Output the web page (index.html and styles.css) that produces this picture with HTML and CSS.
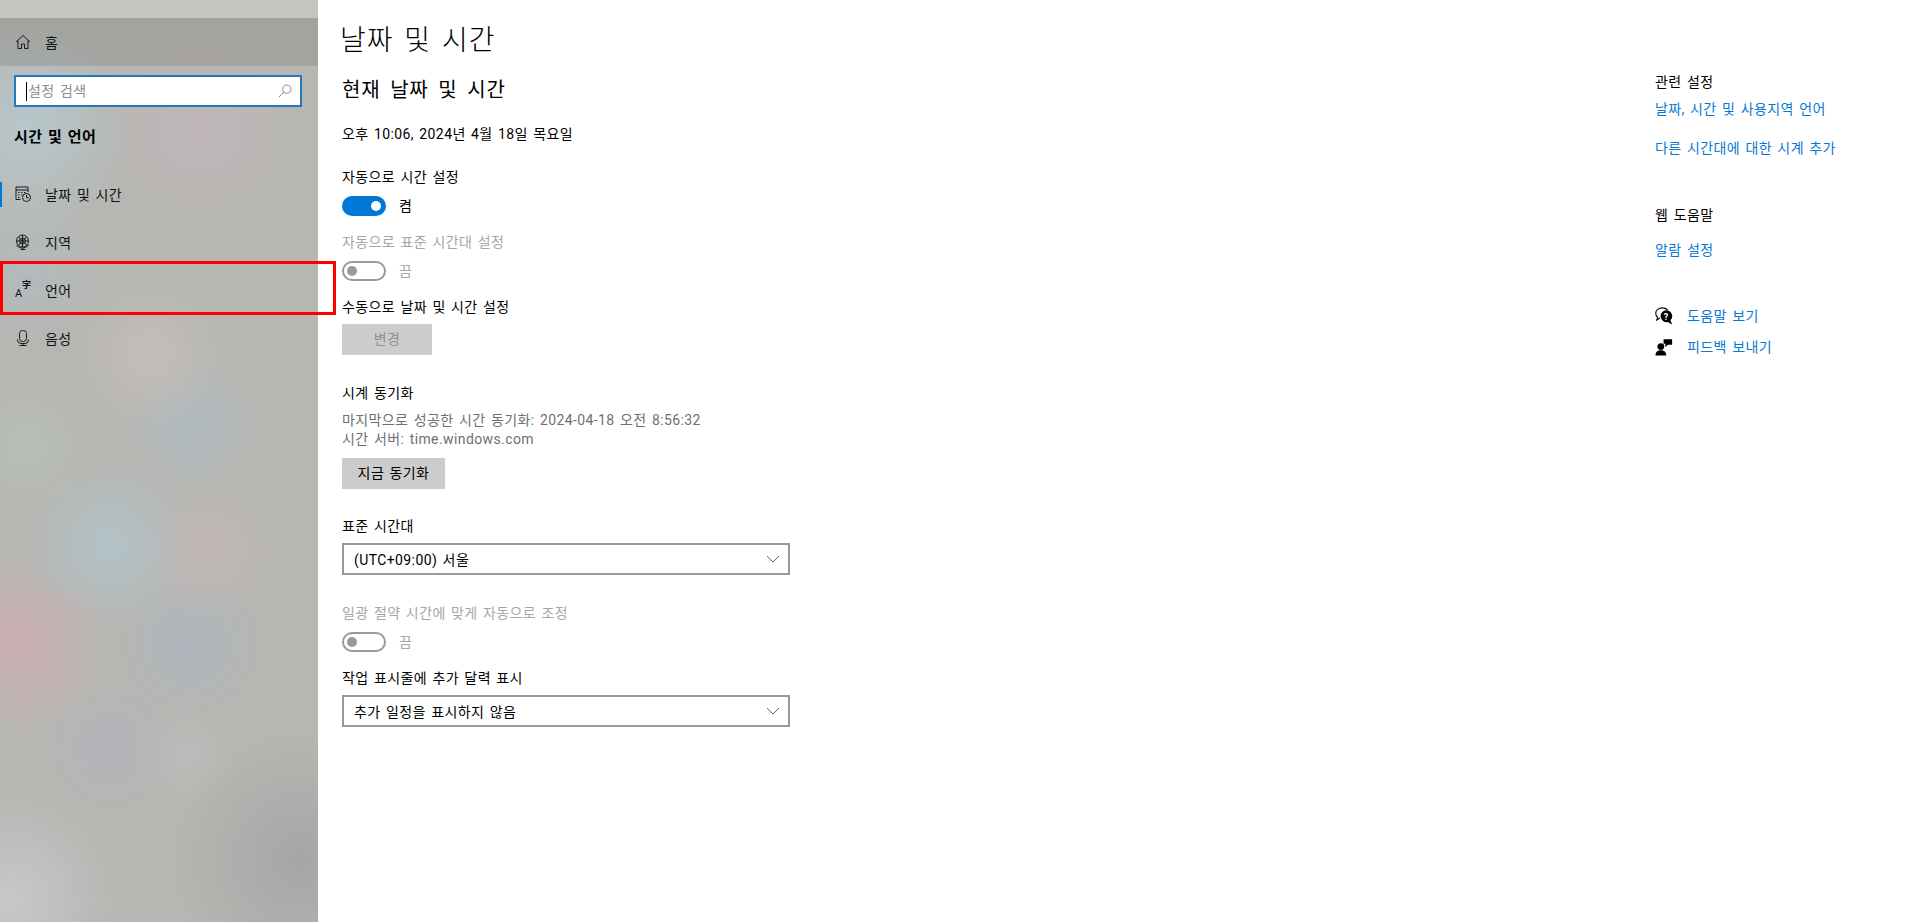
FILE: index.html
```html
<!DOCTYPE html>
<html lang="ko">
  <head>
    <meta charset="UTF-8" />
    <meta name="viewport" content="width=device-width, initial-scale=1.0" />
    <title>날짜 및 시간</title>
    <link rel="stylesheet" href="styles.css">
  </head>

  <body>
    <div class="page">
      <!-- sidebar -->
      <nav class="sidebar">
        <div class="top-strip"></div>
        <div class="nav-item nav-home">
          <svg class="nav-icon" viewBox="0 0 16 16"><path d="M1 8 8 1.500l7 6.500M3 6.500v8h3.500v-4.500h3v4.500h3.500v-8" /></svg>
          <span class="home-text">홈</span>
        </div>
        <div class="search">
          <span class="search-text">설정 검색</span>
          <svg class="search-icon" viewBox="0 0 14 14"><circle cx="8.800" cy="5.200" r="4.200" /><path d="M5.800 8.200 1 13" /></svg>
        </div>
        <div class="side-title">시간 및 언어</div>
        <div class="nav-item nav-active">
          <svg class="nav-icon" viewBox="0 0 16 16">
            <path d="M5.500 13.500h-4.500v-12.500h12v5M1 4h12" />
            <path d="M3 6.500h1.500M6 6.500h1.500M9 6.500h1.500M3 9h1.500M6 9h1.500M3 11.500h1.500" />
            <circle cx="11.500" cy="11.500" r="4" />
            <path d="M11.500 9v2.700h2.300" />
          </svg>
          <span>날짜 및 시간</span>
        </div>
        <div class="nav-item">
          <svg class="nav-icon" viewBox="0 0 16 16">
            <circle cx="7.500" cy="7" r="6" />
            <circle cx="7.500" cy="7" r="3" />
            <path d="M3.500 3l8 8M11.500 3l-8 8M7.500 1v12M1.500 7h12M1.500 11.500Q7.500 17 14 11M8 14.500v1M5.500 15.500h5" />
          </svg>
          <span>지역</span>
        </div>
        <div class="nav-item">
          <span class="lang-icon"><span class="lang-a">A</span><span class="lang-ja">字</span></span>
          <span>언어</span>
        </div>
        <div class="nav-item">
          <svg class="nav-icon" viewBox="0 0 16 16">
            <rect x="4.500" y="0.500" width="7" height="11" rx="3" />
            <path d="M2.500 9.500v.5a3.500 3.500 0 0 0 3.500 3.500h4a3.500 3.500 0 0 0 3.500-3.500v-.5M8 13.500v2M4.500 15.500h7" />
          </svg>
          <span>음성</span>
        </div>
      </nav>

      <!-- content -->
      <main class="main">
        <h1 class="title">날짜 및 시간</h1>
        <h2 class="subtitle">현재 날짜 및 시간</h2>
        <div class="line date-line">오후 10:06, 2024년 4월 18일 목요일</div>

        <div class="line auto-time">자동으로 시간 설정</div>
        <div class="toggle-row">
          <span class="toggle toggle-on"></span>
          <span class="toggle-text">켬</span>
        </div>

        <div class="line gap-s disabled">자동으로 표준 시간대 설정</div>
        <div class="toggle-row">
          <span class="toggle"></span>
          <span class="toggle-text disabled">끔</span>
        </div>

        <div class="line gap-s">수동으로 날짜 및 시간 설정</div>
        <div class="btn btn-change">변경</div>

        <div class="line gap-l">시계 동기화</div>
        <div class="desc">
          <div>마지막으로 성공한 시간 동기화: 2024-04-18 오전 8:56:32</div>
          <div>시간 서버: time.windows.com</div>
        </div>
        <div class="btn btn-sync">지금 동기화</div>

        <div class="line gap-zone">표준 시간대</div>
        <div class="select">
          <span>(UTC+09:00) 서울</span>
          <svg class="chevron" viewBox="0 0 14 8"><path d="M1 1l6 6 6-6" /></svg>
        </div>

        <div class="line gap-l disabled">일광 절약 시간에 맞게 자동으로 조정</div>
        <div class="toggle-row">
          <span class="toggle"></span>
          <span class="toggle-text disabled">끔</span>
        </div>

        <div class="line gap-s">작업 표시줄에 추가 달력 표시</div>
        <div class="select">
          <span>추가 일정을 표시하지 않음</span>
          <svg class="chevron" viewBox="0 0 14 8"><path d="M1 1l6 6 6-6" /></svg>
        </div>
      </main>

      <!-- related links -->
      <aside class="aside">
        <div class="line">관련 설정</div>
        <a class="link link-first">날짜, 시간 및 사용지역 언어</a>
        <a class="link link-second">다른 시간대에 대한 시계 추가</a>
        <div class="line web-help">웹 도움말</div>
        <a class="link link-alarm">알람 설정</a>
        <div class="help-row help-first">
          <svg class="help-icon" viewBox="0 0 20 20">
            <path class="outline" d="M14 3.500C12.800 1.800 10.500 1 8 1 4 1 .8 3.500.8 7c0 1.800.8 3.200 2 4.200L2 14.500l3.500-2.200" />
            <path class="solid" d="M12.500 3.500a6.700 6.700 0 0 1 4.700 11.400l2 4.600-5.200-2.700a6.700 6.700 0 1 1-1.500-13.300z" />
            <text class="help-mark" x="12.500" y="14">?</text>
          </svg>
          <a class="link-plain">도움말 보기</a>
        </div>
        <div class="help-row help-second">
          <svg class="help-icon" viewBox="0 0 20 20">
            <circle class="solid" cx="6.500" cy="9.500" r="3.800" />
            <path class="solid" d="M0.500 19.500c0-4.200 2.500-6 6-6s6 1.800 6 6z" />
            <path class="solid" d="M9.500 1.500h9.500v6h-4.500l-3 2.500v-3.500h-2z" />
          </svg>
          <a class="link-plain">피드백 보내기</a>
        </div>
      </aside>
    </div>

    <div class="highlight"></div>
  </body>
</html>
```

FILE: styles.css
```css
* {
  margin: 0;
  padding: 0;
  box-sizing: border-box;
  font-family: Roboto, "Noto Sans CJK KR", sans-serif;
}
body {
  background: white;
  color: black;
  font-size: 14px;
  letter-spacing: 0.4px;
  word-spacing: 1.5px;
  overflow: hidden;
}
.page {
  display: flex;
  height: 922px;
}

/* sidebar */
.sidebar {
  flex: 0 0 318px;
  background:
    radial-gradient(circle at 25px 130px, rgba(184, 206, 214, 0.7), transparent 110px),
    radial-gradient(circle at 200px 130px, rgba(198, 182, 188, 0.6), transparent 100px),
    radial-gradient(circle at 30px 270px, rgba(176, 190, 200, 0.5), transparent 80px),
    radial-gradient(circle at 150px 355px, rgba(205, 195, 190, 0.6), transparent 80px),
    radial-gradient(circle at 25px 445px, rgba(184, 196, 184, 0.7), transparent 70px),
    radial-gradient(circle at 190px 425px, rgba(172, 186, 196, 0.7), transparent 70px),
    radial-gradient(circle at 110px 545px, rgba(178, 198, 206, 0.75), transparent 85px),
    radial-gradient(circle at 210px 550px, rgba(198, 184, 184, 0.7), transparent 70px),
    radial-gradient(circle at 20px 645px, rgba(208, 172, 178, 0.85), transparent 90px),
    radial-gradient(circle at 190px 645px, rgba(174, 182, 194, 0.75), transparent 75px),
    radial-gradient(circle at 110px 750px, rgba(176, 180, 192, 0.6), transparent 70px),
    radial-gradient(circle at 185px 755px, rgba(190, 190, 190, 0.7), transparent 50px),
    radial-gradient(circle at 10px 900px, rgba(198, 200, 202, 1), transparent 110px),
    radial-gradient(circle at 300px 860px, rgba(166, 166, 166, 1), transparent 130px),
    #b6b6b2;
}
.top-strip {
  height: 18px;
  background: rgba(255, 255, 255, 0.2);
}
.nav-item {
  display: flex;
  align-items: center;
  height: 48px;
  padding-left: 15px;
  color: #111;
}
.nav-item > span:last-child {
  margin-left: 14px;
}
.nav-home {
  background: rgba(0, 0, 0, 0.1);
}
.nav-active {
  position: relative;
  margin-top: 22px;
}
.nav-active::before {
  content: "";
  position: absolute;
  left: 0;
  top: 12px;
  width: 2px;
  height: 25px;
  background: #0078d7;
}
.nav-item > .home-text {
  margin-left: 17px;
}
.nav-icon {
  flex: 0 0 16px;
  width: 16px;
  height: 16px;
  fill: none;
  stroke: #1a1a1a;
  stroke-width: 1;
}
.lang-icon {
  position: relative;
  flex: 0 0 16px;
  height: 16px;
}
.lang-a {
  position: absolute;
  left: 0;
  bottom: -1px;
  font-size: 11px;
  line-height: 11px;
}
.lang-ja {
  position: absolute;
  left: 7px;
  top: -2px;
  font-size: 9px;
  line-height: 10px;
  font-weight: 700;
}
.search {
  display: flex;
  align-items: center;
  justify-content: space-between;
  height: 32px;
  margin: 9px 16px 0 14px;
  padding: 0 8px 0 10px;
  background: white;
  border: 2px solid #2478bd;
}
.search-text {
  padding-left: 1px;
  border-left: 1px solid black;
  line-height: 19px;
  color: #8c8c8c;
}
.search-icon {
  width: 14px;
  height: 14px;
  fill: none;
  stroke: #8a8a8a;
  stroke-width: 1;
}
.side-title {
  margin: 19px 0 0 14px;
  height: 22px;
  line-height: 22px;
  font-size: 15px;
  font-weight: 700;
}

/* content */
.main {
  flex: 1;
  padding: 21px 0 0 24px;
}
.title {
  height: 40px;
  margin-left: -2px;
  line-height: 40px;
  font-size: 28px;
  font-weight: 300;
  letter-spacing: 1px;
  word-spacing: 3px;
}
.subtitle {
  height: 28px;
  margin-top: 15px;
  margin-bottom: -1px;
  line-height: 28px;
  font-size: 20px;
  font-weight: 400;
  letter-spacing: 0.8px;
  word-spacing: 4px;
}
.line {
  height: 20px;
  line-height: 20px;
}
.date-line {
  margin-top: 21px;
}
.auto-time {
  margin-top: 23px;
}
.gap-s {
  margin-top: 16px;
}
.gap-l {
  margin-top: 28px;
}
.gap-zone {
  margin-top: 27px;
}
.disabled {
  color: #a6a6a6;
}
.toggle-row {
  display: flex;
  align-items: center;
  height: 20px;
  margin-top: 9px;
}
.toggle {
  position: relative;
  width: 44px;
  height: 20px;
  border: 2px solid #999;
  border-radius: 10px;
}
.toggle::after {
  content: "";
  position: absolute;
  left: 3px;
  top: 3px;
  width: 10px;
  height: 10px;
  border-radius: 50%;
  background: #999;
}
.toggle-on {
  border-color: #0078d7;
  background: #0078d7;
}
.toggle-on::after {
  left: auto;
  right: 3px;
  background: white;
}
.toggle-text {
  margin: -2px 0 0 13px;
}
.btn {
  height: 31px;
  margin-top: 7px;
  line-height: 31px;
  text-align: center;
  background: #cccccc;
}
.btn-change {
  width: 90px;
  color: #8f8f8f;
}
.btn-sync {
  width: 103px;
  margin-top: 9px;
}
.desc {
  margin-top: 8px;
  line-height: 19px;
  color: #6f6f6f;
}
.select {
  display: flex;
  align-items: center;
  justify-content: space-between;
  width: 448px;
  height: 32px;
  margin-top: 7px;
  padding: 0 8px 0 10px;
  border: 2px solid #999;
}
.chevron {
  width: 14px;
  height: 8px;
  fill: none;
  stroke: #666;
  stroke-width: 1;
}

/* right column */
.aside {
  flex: 0 0 251px;
  padding-top: 72px;
}
.link, .link-plain {
  display: block;
  height: 20px;
  line-height: 20px;
  color: #0a78d2;
}
.link-first {
  margin-top: 7px;
}
.link-second {
  margin-top: 19px;
}
.web-help {
  margin-top: 47px;
}
.link-alarm {
  margin-top: 15px;
}
.help-row {
  display: flex;
  align-items: center;
  gap: 14px;
  height: 20px;
}
.help-first {
  margin-top: 46px;
}
.help-second {
  margin-top: 11px;
}
.help-icon {
  width: 18px;
  height: 18px;
}
.outline {
  fill: none;
  stroke: black;
  stroke-width: 1.2;
}
.solid {
  fill: black;
}
.help-mark {
  fill: white;
  font-size: 10px;
  font-weight: 700;
  text-anchor: middle;
}

/* red annotation box */
.highlight {
  position: absolute;
  left: 0;
  top: 261px;
  width: 336px;
  height: 54px;
  border: 3px solid #f00;
}
```
